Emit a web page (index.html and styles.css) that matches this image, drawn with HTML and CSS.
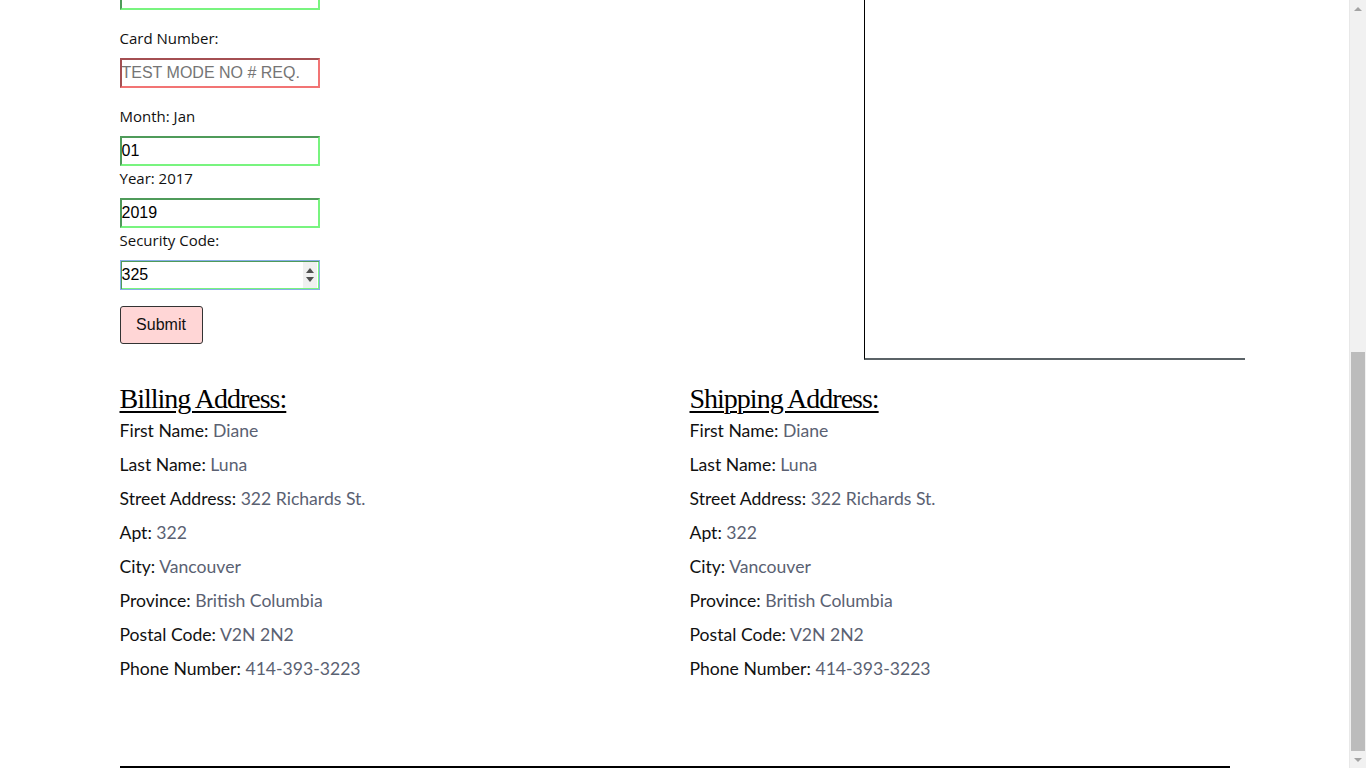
FILE: index.html
```html
<!DOCTYPE html>
<html lang="en">
<head>
<meta charset="utf-8">
<title>Checkout</title>
<link rel="stylesheet" href="styles.css">
</head>
<body>
<div class="page">
  <main class="container">
    <section class="top-row">
      <form class="pay-form">
        <div class="clip-top field-spaced">
          <input class="field-input ok" type="text" value="" aria-label="Name on card">
        </div>
        <div class="field field-spaced">
          <label class="field-label">Card Number:</label>
          <input class="field-input bad" type="text" placeholder="TEST MODE NO # REQ.">
        </div>
        <div class="field field-tight">
          <label class="field-label">Month: Jan</label>
          <input class="field-input ok" type="text" value="01">
        </div>
        <div class="field field-tight">
          <label class="field-label">Year: 2017</label>
          <input class="field-input ok" type="text" value="2019">
        </div>
        <div class="field">
          <label class="field-label">Security Code:</label>
          <div class="input-wrap">
            <input class="field-input focused" type="text" value="325">
            <span class="spinner"><span class="spin-up"></span><span class="spin-down"></span></span>
          </div>
        </div>
        <button class="submit-btn" type="button">Submit</button>
      </form>
      <aside class="summary"></aside>
    </section>

    <section class="addresses">
      <div class="address">
        <h3 class="address-title">Billing Address:</h3>
        <p class="address-line">First Name: <span class="val">Diane</span></p>
        <p class="address-line">Last Name: <span class="val">Luna</span></p>
        <p class="address-line">Street Address: <span class="val">322 Richards St.</span></p>
        <p class="address-line">Apt: <span class="val">322</span></p>
        <p class="address-line">City: <span class="val">Vancouver</span></p>
        <p class="address-line">Province: <span class="val">British Columbia</span></p>
        <p class="address-line">Postal Code: <span class="val">V2N 2N2</span></p>
        <p class="address-line">Phone Number: <span class="val">414-393-3223</span></p>
      </div>
      <div class="address">
        <h3 class="address-title">Shipping Address:</h3>
        <p class="address-line">First Name: <span class="val">Diane</span></p>
        <p class="address-line">Last Name: <span class="val">Luna</span></p>
        <p class="address-line">Street Address: <span class="val">322 Richards St.</span></p>
        <p class="address-line">Apt: <span class="val">322</span></p>
        <p class="address-line">City: <span class="val">Vancouver</span></p>
        <p class="address-line">Province: <span class="val">British Columbia</span></p>
        <p class="address-line">Postal Code: <span class="val">V2N 2N2</span></p>
        <p class="address-line">Phone Number: <span class="val">414-393-3223</span></p>
      </div>
    </section>
    <div class="footer-rule"></div>
  </main>
</div>
<div class="scrollbar" aria-hidden="true">
  <div class="sb-btn"><span class="sb-up"></span></div>
  <div class="sb-track"><div class="sb-thumb"></div></div>
  <div class="sb-btn"><span class="sb-down"></span></div>
</div>
</body>
</html>
```

FILE: styles.css
```css
* { box-sizing: border-box; }

html, body { height: 100%; }

body {
  margin: 0;
  background: #fff;
  color: #000;
  font-family: "Lato", "Open Sans", sans-serif;
  display: flex;
  overflow: hidden;
}

.page {
  flex: 1;
  height: 768px;
  overflow: hidden;
}

.container {
  width: 1110px;
  margin: 0 auto;
}

/* top row: form + box */
.top-row {
  display: flex;
  align-items: stretch;
  margin-right: -15px;
}
.pay-form {
  width: 744px;
  padding-bottom: 16px;
  display: flex;
  flex-direction: column;
  align-items: flex-start;
}
.clip-top {
  height: 10px;
  overflow: hidden;
  display: flex;
  align-items: flex-end;
}
.field {
  display: flex;
  flex-direction: column;
  align-items: flex-start;
}
.field-spaced { margin-bottom: 18px; }
.field-tight { margin-bottom: 2px; }
.field-label {
  font-family: "Open Sans", "Noto Sans", sans-serif;
  font-size: 15px;
  line-height: 20px;
  margin-bottom: 10px;
  color: #111;
}
.field-input {
  flex-shrink: 0;
  width: 200px;
  height: 30px;
  margin: 0;
  padding: 0;
  font-family: "Liberation Sans", Arial, sans-serif;
  font-size: 16px;
  color: #000;
  background: #fff;
  border: 2px solid;
  outline: none;
}
.field-input.ok {
  border-color: #4f9b5a #78f47f #78f47f #4f9b5a;
}
.field-input.bad {
  border-color: #a44f52 #f27474 #f27474 #a44f52;
}
.field-input::placeholder {
  color: #757575;
}
.field-input.focused {
  border: 1px solid #88aee6;
  padding: 0 0 0 1px;
  box-shadow: inset 1px 1px 0 #4f9b5a, inset -1px -1px 0 #78f47f;
}
.input-wrap {
  position: relative;
}
.spinner {
  position: absolute;
  top: 2px;
  right: 3px;
  width: 14px;
  height: 26px;
  background: #f0f0f0;
  display: flex;
  flex-direction: column;
  align-items: center;
  justify-content: center;
  gap: 4px;
}
.spin-up {
  width: 0;
  height: 0;
  border-left: 4px solid transparent;
  border-right: 4px solid transparent;
  border-bottom: 5px solid #505050;
}
.spin-down {
  width: 0;
  height: 0;
  border-left: 4px solid transparent;
  border-right: 4px solid transparent;
  border-top: 5px solid #505050;
}
.submit-btn {
  margin-top: 16px;
  width: 83px;
  height: 38px;
  padding: 0;
  font-family: "Liberation Sans", Arial, sans-serif;
  font-size: 16px;
  color: #111;
  background: #ffd6d6;
  border: 1px solid #333;
  border-radius: 3px;
}

.summary {
  width: 381px;
  border-left: 1px solid #000;
  border-bottom: 2px solid #5b6367;
}

/* addresses */
.addresses {
  margin-top: 22px;
  display: grid;
  grid-template-columns: 540px 540px;
  column-gap: 30px;
}
.address-title {
  margin: 0 0 3px;
  font-family: "Liberation Serif", serif;
  font-size: 28px;
  line-height: 34px;
  font-weight: normal;
  letter-spacing: -1px;
  text-decoration: underline;
  text-decoration-thickness: 2px;
  text-underline-offset: 3px;
}
.address-line {
  margin: 0 0 10px;
  font-size: 17.6px;
  line-height: 24px;
  color: #111;
}
.address-line:last-child {
  margin-bottom: 0;
}
.val {
  color: #5a6172;
}

.footer-rule {
  margin-top: 85px;
  height: 2px;
  background: #000;
}

/* drawn scrollbar */
.scrollbar {
  width: 17px;
  height: 768px;
  flex-shrink: 0;
  background: #f1f1f1;
  border-left: 1px solid #e8e8e8;
  display: flex;
  flex-direction: column;
}
.sb-btn {
  height: 17px;
  display: flex;
  align-items: center;
  justify-content: center;
}
.sb-up {
  width: 0;
  height: 0;
  border-left: 4px solid transparent;
  border-right: 4px solid transparent;
  border-bottom: 4px solid #a3a3a3;
}
.sb-down {
  width: 0;
  height: 0;
  border-left: 4px solid transparent;
  border-right: 4px solid transparent;
  border-top: 4px solid #a3a3a3;
}
.sb-track {
  flex: 1;
  display: flex;
  flex-direction: column;
  justify-content: flex-end;
  padding: 0 1px 0 1px;
}
.sb-thumb {
  height: 399px;
  background: #bcbcbc;
}
```
